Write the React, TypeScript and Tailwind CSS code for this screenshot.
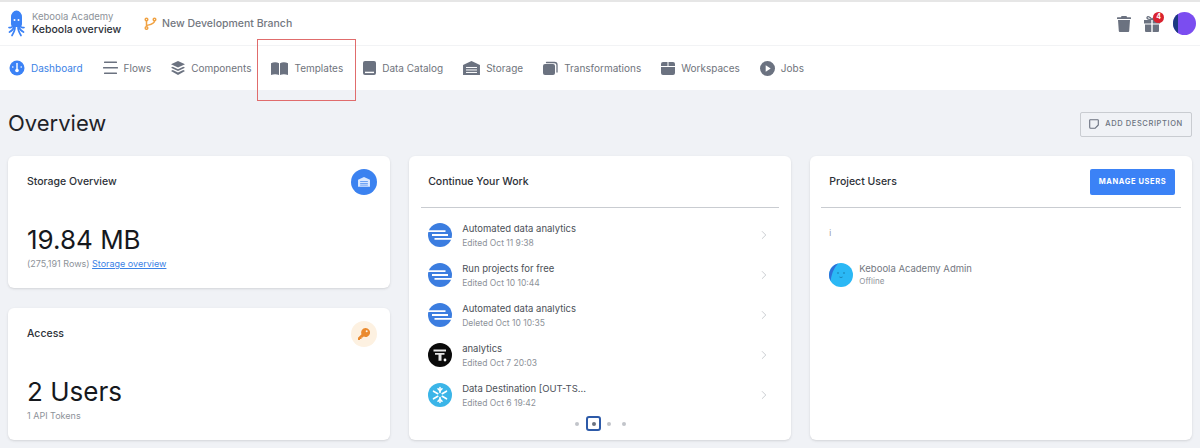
import { ChevronRight } from 'lucide-react';
import type { ReactNode } from 'react';

const G = '#6b7280';

function Octopus() {
  return (
    <svg width="17" height="28" viewBox="0 0 17 28" fill="#3b82f6">
      <path d="M3 7a5.5 6.5 0 0 1 11 0v7c0 1.5-1 2.5-2 3H5c-1-.5-2-1.5-2-3z" />
      <g stroke="#3b82f6" strokeWidth="1.7" fill="none" strokeLinecap="round">
        <path d="M5 16c-1 1.5-2.5 2-4 1.5" />
        <path d="M6 17c-.5 2-2.5 4-4.5 5" />
        <path d="M7 17.5c0 3-1.5 5.500-3 8" />
        <path d="M10 17.500c0 3 1.500 5.500 3 8" />
        <path d="M11 17c.5 2 2.500 4 4.500 5" />
        <path d="M12 16c1 1.500 2.500 2 4 1.500" />
      </g>
      <circle cx="6.5" cy="10" r="1" fill="#fff" />
      <circle cx="10.500" cy="10" r="1" fill="#fff" />
    </svg>
  );
}

function BranchIcon() {
  return (
    <svg width="13" height="13" viewBox="0 0 13 13" fill="none" stroke="#f0a243" strokeWidth="1.500">
      <circle cx="2.500" cy="2.500" r="1.300" />
      <circle cx="2.500" cy="11" r="1.300" />
      <circle cx="10.500" cy="2.500" r="1.300" />
      <path d="M2.500 4v5.500M10.500 4c0 3-4 3.500-8 4.500" />
    </svg>
  );
}

function DashboardIcon() {
  return (
    <svg width="16" height="16" viewBox="0 0 16 16">
      <circle cx="8" cy="8" r="7.500" fill="#3b82f6" />
      <circle cx="8" cy="10.500" r="1.800" fill="#fff" />
      <path d="M7.300 3h1.400v6H7.300z" fill="#fff" />
      <circle cx="3.800" cy="7" r=".8" fill="#fff" />
      <circle cx="12.200" cy="7" r=".8" fill="#fff" />
    </svg>
  );
}

function FlowsIcon() {
  return (
    <svg width="15" height="14" viewBox="0 0 15 14" fill={G}>
      <rect x="1" y="0.500" width="13" height="1.600" rx=".5" />
      <rect x="0" y="6" width="15" height="1.600" rx=".5" />
      <rect x="1" y="11.500" width="13" height="1.600" rx=".5" />
    </svg>
  );
}

function LayersIcon() {
  return (
    <svg width="14" height="14" viewBox="0 0 14 14" fill={G}>
      <path d="M7 0l7 3.300-7 3.300L0 3.300z" />
      <path d="M1.700 5.700L7 8.200l5.300-2.500L14 6.700 7 10 0 6.700z" />
      <path d="M1.700 9.100L7 11.600l5.300-2.500L14 10.100 7 14l-7-3.900z" />
    </svg>
  );
}

function BookOpenIcon() {
  return (
    <svg width="17" height="13" viewBox="0 0 17 13" fill={G}>
      <path d="M0 1.200C2.500 0 5.800 0 8 1.200V13c-2.200-1-5.500-1-8 0z" />
      <path d="M17 1.200C14.500 0 11.200 0 9 1.200V13c2.200-1 5.500-1 8 0z" />
    </svg>
  );
}

function BookIcon() {
  return (
    <svg width="13" height="14" viewBox="0 0 13 14">
      <rect width="13" height="14" rx="2" fill={G} />
      <rect x="2" y="10.700" width="9" height="1.400" fill="#fff" />
    </svg>
  );
}

function WarehouseIcon({ color = G, line = '#fff', size = 17 }: { color?: string; line?: string; size?: number }) {
  return (
    <svg width={size} height={size * 0.82} viewBox="0 0 17 14" fill={color}>
      <path d="M0 4l8.500-4L17 4v10H0z" />
      <g fill={line}>
        <rect x="3" y="6" width="11" height="1" />
        <rect x="3" y="8.500" width="11" height="1" />
        <rect x="3" y="11" width="11" height="1" />
      </g>
    </svg>
  );
}

function CopyIcon() {
  return (
    <svg width="15" height="14" viewBox="0 0 15 14">
      <rect x="0" y="3" width="12" height="11" rx="2" fill={G} />
      <path d="M3.500 1.500h8a2.500 2.500 0 0 1 2.500 2.500v7" fill="none" stroke={G} strokeWidth="1.300" strokeLinecap="round" />
    </svg>
  );
}

function WorkspaceIcon() {
  return (
    <svg width="14" height="13" viewBox="0 0 14 13" fill={G}>
      <path d="M2 0h4.500v4H0V2a2 2 0 0 1 2-2zM7.500 0H12a2 2 0 0 1 2 2v2H7.500zM0 5h14v6a2 2 0 0 1-2 2H2a2 2 0 0 1-2-2z" />
    </svg>
  );
}

function PlayIcon() {
  return (
    <svg width="15" height="15" viewBox="0 0 15 15">
      <circle cx="7.500" cy="7.500" r="7.500" fill={G} />
      <path d="M5.700 4.300l5 3.200-5 3.200z" fill="#fff" />
    </svg>
  );
}

function TrashIcon() {
  return (
    <svg width="14" height="16" viewBox="0 0 14 16" fill={G}>
      <path d="M4.500 0h5l.5 1.200h3.500a.5.5 0 0 1 .5.500V3H0V1.700a.5.500 0 0 1 .5-.5H4z" />
      <path d="M1 4h12l-.8 11a1 1 0 0 1-1 1H2.800a1 1 0 0 1-1-1z" />
    </svg>
  );
}

function GiftIcon() {
  return (
    <svg width="16" height="16" viewBox="0 0 16 16" fill={G}>
      <path d="M0 4h7.300v3.500H0zM8.700 4H16v3.500H8.700zM1 8.500h6.300V16H2a1 1 0 0 1-1-1zM8.700 8.500H15V15a1 1 0 0 1-1 1H8.700z" />
      <path d="M8 3.500C6 .5 3.500 0 3 1.500S5 3.500 8 3.500zM8 3.500c2-3 4.500-3.500 5-2S11 3.500 8 3.500z" fill="none" stroke={G} strokeWidth="1.200" />
    </svg>
  );
}

function KeyIcon() {
  return (
    <svg width="12" height="12" viewBox="0 0 12 12" fill="#ea8a2e">
      <path d="M7.500 0a4.500 4.500 0 1 1-1.800 8.600L4.800 9.500H3.500V11H2v1H0V9.700l3.500-3.500A4.500 4.500 0 0 1 7.500 0z" />
      <circle cx="8.700" cy="3.300" r="1" fill="#fdf1e1" />
    </svg>
  );
}

function NoteIcon() {
  return (
    <svg width="10" height="10" viewBox="0 0 10 10" fill="none" stroke={G} strokeWidth="1.100" strokeLinejoin="round">
      <path d="M1.200.7h7.600a.5.5 0 0 1 .5.500v4.800L6 9.300H1.700a1 1 0 0 1-1-1V1.200z" />
    </svg>
  );
}

function StripesLogo() {
  return (
    <svg width="24" height="24" viewBox="0 0 24 24">
      <circle cx="12" cy="12" r="12" fill="#3b7de0" />
      <path d="M0 8.200h17.500M24 15.800H6.500M4 12h16" stroke="#fff" strokeWidth="1.800" />
    </svg>
  );
}

function TLogo() {
  return (
    <svg width="24" height="24" viewBox="0 0 24 24">
      <circle cx="12" cy="12" r="12" fill="#0a0a0a" />
      <path d="M5.500 6.500h12.500v2H5.500zM7 10h9.500v1.800h-3v6h-3v-6H7z" fill="#e5e5e5" />
      <circle cx="17" cy="17" r="1.400" fill="#fff" />
    </svg>
  );
}

function SnowflakeLogo() {
  return (
    <svg width="24" height="24" viewBox="0 0 24 24">
      <circle cx="12" cy="12" r="12" fill="#3bb5e8" />
      <g stroke="#fff" strokeWidth="1.600" strokeLinecap="round" fill="none">
        <path d="M12 4.500v5M12 14.500v5M5.500 8.200l4.300 2.500M14.200 13.300l4.300 2.500M5.500 15.800l4.300-2.500M14.200 10.700l4.300-2.500" />
        <path d="M10 5.800l2 2 2-2M10 18.200l2-2 2 2" />
      </g>
    </svg>
  );
}

function UserAvatar() {
  return (
    <svg width="24" height="24" viewBox="0 0 24 24">
      <circle cx="12" cy="12" r="12" fill="#2bb8f5" />
      <path d="M0 12A12 12 0 0 1 9 .4C6 4 3 8 1.600 18A12 12 0 0 1 0 12z" fill="#2f6fd8" />
      <circle cx="9" cy="10" r=".7" fill="#156a96" />
      <circle cx="15" cy="10" r=".7" fill="#156a96" />
      <path d="M10.500 14c.8.600 2.200.600 3 0" stroke="#156a96" strokeWidth=".7" fill="none" />
    </svg>
  );
}

const navItems: { label: string; icon: ReactNode; active?: boolean; marked?: boolean }[] = [
  { label: 'Dashboard', icon: <DashboardIcon />, active: true },
  { label: 'Flows', icon: <FlowsIcon /> },
  { label: 'Components', icon: <LayersIcon /> },
  { label: 'Templates', icon: <BookOpenIcon />, marked: true },
  { label: 'Data Catalog', icon: <BookIcon /> },
  { label: 'Storage', icon: <WarehouseIcon /> },
  { label: 'Transformations', icon: <CopyIcon /> },
  { label: 'Workspaces', icon: <WorkspaceIcon /> },
  { label: 'Jobs', icon: <PlayIcon /> },
];

const recent = [
  { title: 'Automated data analytics', sub: 'Edited Oct 11 9:38', logo: <StripesLogo /> },
  { title: 'Run projects for free', sub: 'Edited Oct 10 10:44', logo: <StripesLogo /> },
  { title: 'Automated data analytics', sub: 'Deleted Oct 10 10:35', logo: <StripesLogo /> },
  { title: 'analytics', sub: 'Edited Oct 7 20:03', logo: <TLogo /> },
  { title: 'Data Destination [OUT-TS...', sub: 'Edited Oct 6 19:42', logo: <SnowflakeLogo /> },
];

export default function App() {
  return (
    <div className="h-[448px] w-[1200px] overflow-hidden bg-[#f0f2f6] font-['Inter',sans-serif] text-[#1f2329]">
      <header className="flex h-[46px] items-center border-t-2 border-b border-t-[#e6e6e6] border-b-[#f2f3f5] bg-white pl-2 pr-1">
        <Octopus />
        <div className="ml-[7px] flex w-[112px] flex-col">
          <span className="text-[9.5px] leading-[12px] text-[#8d9299]">Keboola Academy</span>
          <span className="text-[10.5px] font-medium leading-[13px] text-[#2d3138]">Keboola overview</span>
        </div>
        <BranchIcon />
        <span className="ml-[5px] text-[10.5px] font-medium text-[#73787f]">New Development Branch</span>
        <div className="ml-auto flex items-center">
          <TrashIcon />
          <div className="relative ml-[13px]">
            <GiftIcon />
            <span className="absolute -right-[4px] -top-[4px] flex h-[11px] w-[11px] items-center justify-center rounded-full bg-[#d9222f] text-[7px] font-bold text-white">4</span>
          </div>
          <div className="ml-[13px] h-[23px] w-[23px] overflow-hidden rounded-full bg-[#7b4df0]">
            <div className="h-full w-[5px] bg-[#1c3a80]" />
          </div>
        </div>
      </header>

      <nav className="flex h-[44px] items-center gap-5 bg-white pl-[9px]">
        {navItems.map((item) => (
          <div key={item.label} className="relative flex items-center gap-[6px]">
            {item.icon}
            <span className={`whitespace-nowrap text-[10px] ${item.active ? 'text-[#3b82e6]' : 'text-[#6f747c]'}`}>{item.label}</span>
            {item.marked && <div className="absolute -bottom-[25px] -left-[14px] -right-[13px] -top-[22px] border border-[#e06c6c]" />}
          </div>
        ))}
      </nav>

      <main className="px-2">
        <div className="flex h-[66px] items-center justify-between">
          <h1 className="text-[22px] leading-none text-[#1f2329]">Overview</h1>
          <button className="mt-[2px] flex h-[25px] w-[112px] items-center justify-center gap-[6px] rounded-[2px] border border-[#c9ccd1] text-[7.5px] font-medium tracking-[0.08em] text-[#6b7280]">
            <NoteIcon />
            ADD DESCRIPTION
          </button>
        </div>

        <div className="grid grid-cols-3 gap-x-[19.5px]">
          <div className="flex flex-col gap-5">
            <section className="h-[132px] rounded-md bg-white pl-[19px] pr-[13px] pt-[13px] shadow-sm">
              <div className="flex items-center justify-between">
                <h2 className="text-[10.5px] font-medium text-[#2d3138]">Storage Overview</h2>
                <div className="flex h-[26px] w-[26px] items-center justify-center rounded-full bg-[#3b82f0]">
                  <WarehouseIcon color="#dbe9ff" line="#3b82f0" size={12} />
                </div>
              </div>
              <p className="mt-[30px] text-[26px] leading-[30px] text-[#16181d]">19.84 MB</p>
              <p className="mt-[3px] text-[9px] leading-[12px] text-[#8d9299]">
                (275,191 Rows) <span className="text-[#3b82e6] underline">Storage overview</span>
              </p>
            </section>
            <section className="h-[132px] rounded-md bg-white pl-[19px] pr-[13px] pt-[13px] shadow-sm">
              <div className="flex items-center justify-between">
                <h2 className="text-[10.5px] font-medium text-[#2d3138]">Access</h2>
                <div className="flex h-[26px] w-[26px] items-center justify-center rounded-full bg-[#fdf1e1]">
                  <KeyIcon />
                </div>
              </div>
              <p className="mt-[30px] text-[26px] leading-[30px] text-[#16181d]">2 Users</p>
              <p className="mt-[3px] text-[9px] leading-[12px] text-[#8d9299]">1 API Tokens</p>
            </section>
          </div>

          <section className="h-[284px] rounded-md bg-white px-3 shadow-sm">
            <div className="flex h-[52px] items-center border-b border-[#c9ccd1] pl-[7px]">
              <h2 className="text-[10.5px] font-medium text-[#2d3138]">Continue Your Work</h2>
            </div>
            <ul className="mt-[7px]">
              {recent.map((row) => (
                <li key={row.sub} className="flex h-10 items-center pl-[7px] pr-2">
                  {row.logo}
                  <div className="ml-[10px] flex flex-col">
                    <span className="text-[9.5px] leading-[13px] text-[#4b5058]">{row.title}</span>
                    <span className="mt-[2px] text-[8.5px] leading-[12px] text-[#8d9299]">{row.sub}</span>
                  </div>
                  <ChevronRight className="ml-auto text-[#c4c7cc]" size={14} strokeWidth={1.500} />
                </li>
              ))}
            </ul>
            <div className="ml-[154px] mt-[1px] flex items-center">
              <span className="h-1 w-1 rounded-full bg-[#c2c5ca]" />
              <span className="ml-[7px] flex h-[15px] w-[15px] items-center justify-center rounded-[3px] border-2 border-[#2d5aa8]">
                <span className="h-1 w-1 rounded-full bg-[#6b7280]" />
              </span>
              <span className="ml-[6px] h-1 w-1 rounded-full bg-[#c2c5ca]" />
              <span className="ml-[11px] h-1 w-1 rounded-full bg-[#c2c5ca]" />
            </div>
          </section>

          <section className="h-[284px] rounded-md bg-white px-[11px] shadow-sm">
            <div className="flex h-[52px] items-center justify-between border-b border-[#c9ccd1] pl-2 pr-[6px]">
              <h2 className="text-[10.5px] font-medium text-[#2d3138]">Project Users</h2>
              <button className="h-[26px] w-[85px] rounded-[2px] bg-[#3b82f6] text-[7.5px] font-bold tracking-[0.08em] text-white">MANAGE USERS</button>
            </div>
            <p className="mt-[20px] pl-2 text-[8px] leading-[10px] text-[#8d9299]">i</p>
            <div className="mt-[24px] flex items-center gap-[6px] pl-2">
              <UserAvatar />
              <div className="flex flex-col">
                <span className="text-[9.5px] leading-[13px] text-[#73787f]">Keboola Academy Admin</span>
                <span className="text-[8px] leading-[13px] text-[#8d9299]">Offline</span>
              </div>
            </div>
          </section>
        </div>
      </main>
    </div>
  );
}
